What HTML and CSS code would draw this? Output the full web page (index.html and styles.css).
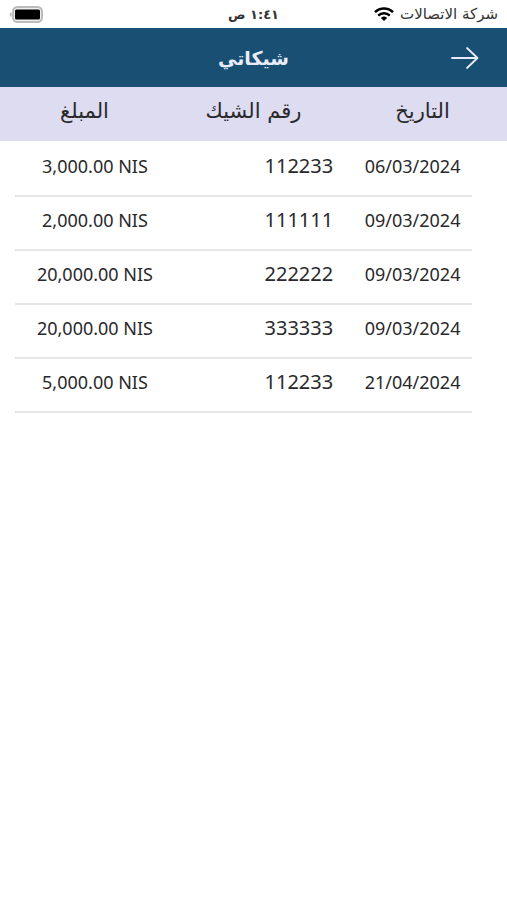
FILE: index.html
```html
<!DOCTYPE html>
<html lang="ar" dir="rtl">
<head>
<meta charset="utf-8">
<meta name="viewport" content="width=device-width, initial-scale=1">
<title>شيكاتي</title>
<link rel="stylesheet" href="styles.css">
</head>
<body>
<div class="status">
  <div class="carrier">
    <span>شركة الاتصالات</span>
    <svg class="wifi" viewBox="0 0 20 14" aria-hidden="true">
      <path d="M1 5.2a12.8 12.8 0 0 1 18 0M4.2 8.6a8.3 8.3 0 0 1 11.6 0" fill="none" stroke="#000" stroke-width="2.5"/>
      <path d="M6.9 11a4.5 4.5 0 0 1 6.200 0L10 14z"/>
    </svg>
  </div>
  <div class="clock">١:٤١ ص</div>
  <div class="power">
    <svg class="battery" viewBox="0 0 34 17" aria-hidden="true">
      <rect x="4" y="1" width="29" height="15" rx="4.5" fill="#eee" stroke="#bbb" stroke-width="2"/>
      <rect x="6" y="3.500" width="25" height="10" rx="1.500"/>
      <path d="M2.500 6a2.600 2.600 0 0 0 0 5z" fill="#bbb"/>
    </svg>
  </div>
</div>
<header class="bar">
  <button class="back" type="button" aria-label="رجوع">
    <svg viewBox="0 0 28 24" aria-hidden="true"><path d="M1 12h25M16 2l10.500 10L16 22" fill="none" stroke="#e8ecfa" stroke-width="1.800" stroke-linecap="round" stroke-linejoin="round"/></svg>
  </button>
  <h1>شيكاتي</h1>
</header>
<table class="checks">
  <thead>
    <tr><th scope="col">التاريخ</th><th scope="col">رقم الشيك</th><th scope="col">المبلغ</th></tr>
  </thead>
  <tbody>
    <tr><td>06/03/2024</td><td class="number">112233</td><td dir="ltr">3,000.00 NIS</td></tr>
    <tr><td>09/03/2024</td><td class="number">111111</td><td dir="ltr">2,000.00 NIS</td></tr>
    <tr><td>09/03/2024</td><td class="number">222222</td><td dir="ltr">20,000.00 NIS</td></tr>
    <tr><td>09/03/2024</td><td class="number">333333</td><td dir="ltr">20,000.00 NIS</td></tr>
    <tr><td>21/04/2024</td><td class="number">112233</td><td dir="ltr">5,000.00 NIS</td></tr>
  </tbody>
</table>
</body>
</html>
```

FILE: styles.css
```css
* { box-sizing: border-box; }
body {
  margin: 0;
  background: #fff;
  color: #29292b;
  font-family: "Noto Sans", "DejaVu Sans", sans-serif;
}
.status {
  display: grid;
  grid-template-columns: 1fr auto 1fr;
  align-items: center;
  height: 28px;
  padding: 0 9px;
  font-family: "DejaVu Sans", sans-serif;
  font-size: 15px;
  color: #333;
}
.carrier { display: flex; align-items: center; gap: 6px; white-space: nowrap; }
.wifi { width: 20px; height: 14px; }
.clock { font-size: 13px; font-weight: bold; }
.power { display: flex; justify-content: flex-end; }
.battery { width: 34px; height: 17px; }
.bar {
  display: grid;
  grid-template-columns: 1fr auto 1fr;
  align-items: center;
  height: 59px;
  padding: 0 28px;
  background: #184f72;
  color: #e8ecfa;
}
.back { justify-self: start; width: 28px; height: 24px; padding: 0; border: 0; background: none; }
.back svg { display: block; width: 28px; height: 24px; }
h1 { margin: 0; font-family: "DejaVu Sans", sans-serif; font-size: 19px; line-height: 28px; }

/* The header spans the window in thirds; the rows are inset with their own columns. */
.checks, .checks thead, .checks tbody { display: block; }
.checks tr { display: grid; align-items: center; }
th, td { padding: 0; text-align: center; white-space: nowrap; }
thead tr {
  grid-template-columns: repeat(3, 1fr);
  height: 54px;
  padding-bottom: 6px;
  background: #dddcf0;
}
th { font-family: "DejaVu Sans", sans-serif; font-size: 21px; line-height: 28px; font-weight: normal; }
tbody { padding-top: 2px; }
tbody tr {
  grid-template-columns: 26fr 39fr 35fr;
  height: 54px;
  margin: 0 35px 0 15px;
  padding-bottom: 6px;
  border-bottom: 2px solid #e6e6e8;
}
td { font-size: 18px; line-height: 28px; }
.number { padding-right: 20px; text-align: right; font-size: 20px; }
```
